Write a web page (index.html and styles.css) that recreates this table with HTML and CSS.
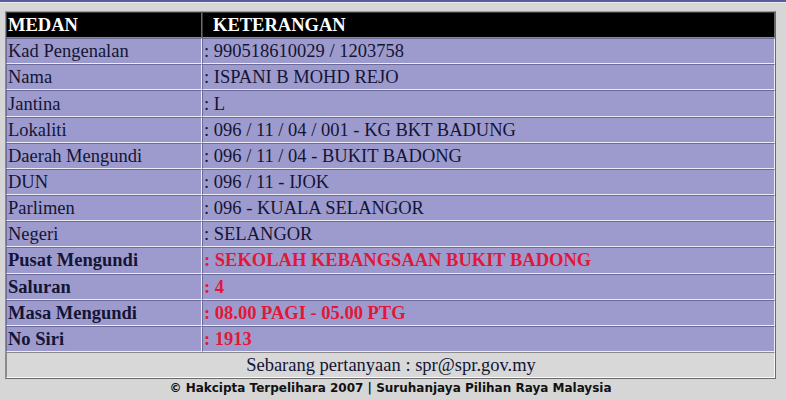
FILE: index.html
```html
<!DOCTYPE html>
<html>
<head>
<meta charset="utf-8">
<link rel="stylesheet" href="styles.css">
</head>
<body>
<div class="topbar"></div>
<div class="page">
<table class="info">
  <tr class="head"><th class="c1">MEDAN</th><th class="c2">KETERANGAN</th></tr>
  <tr><td class="c1">Kad Pengenalan</td><td class="c2">: 990518610029 / 1203758</td></tr>
  <tr><td class="c1">Nama</td><td class="c2">: ISPANI B MOHD REJO</td></tr>
  <tr><td class="c1">Jantina</td><td class="c2">: L</td></tr>
  <tr><td class="c1">Lokaliti</td><td class="c2">: 096 / 11 / 04 / 001 - KG BKT BADUNG</td></tr>
  <tr><td class="c1">Daerah Mengundi</td><td class="c2">: 096 / 11 / 04 - BUKIT BADONG</td></tr>
  <tr><td class="c1">DUN</td><td class="c2">: 096 / 11 - IJOK</td></tr>
  <tr><td class="c1">Parlimen</td><td class="c2">: 096 - KUALA SELANGOR</td></tr>
  <tr><td class="c1">Negeri</td><td class="c2">: SELANGOR</td></tr>
  <tr class="key"><td class="c1">Pusat Mengundi</td><td class="c2">: SEKOLAH KEBANGSAAN BUKIT BADONG</td></tr>
  <tr class="key"><td class="c1">Saluran</td><td class="c2">: 4</td></tr>
  <tr class="key"><td class="c1">Masa Mengundi</td><td class="c2">: 08.00 PAGI - 05.00 PTG</td></tr>
  <tr class="key"><td class="c1">No Siri</td><td class="c2">: 1913</td></tr>
  <tr class="foot"><td colspan="2">Sebarang pertanyaan : spr@spr.gov.my</td></tr>
</table>
<div class="copy">© Hakcipta Terpelihara 2007 | Suruhanjaya Pilihan Raya Malaysia</div>
</div>
</body>
</html>
```
FILE: styles.css
```css
html, body {
  margin: 0;
  padding: 0;
  background: #d6d6d6;
}
.topbar {
  height: 2px;
  background: #5a5a9c;
  border-bottom: 1px solid #ececf2;
}
.page {
  padding: 8px 0 0 5px;
}
.info {
  width: 771px;
  border-collapse: separate;
  border-spacing: 0;
  border-top: 1px solid #9a9a9a;
  border-left: 1px solid #8c8c8c;
  border-right: 1px solid #6a6a6a;
  border-bottom: 1px solid #6a6a6a;
  font-family: "Liberation Serif", "Times New Roman", serif;
  font-size: 18.5px;
  color: #141434;
}
.info td, .info th {
  height: 24.17px;
  line-height: 24px;
  padding: 0 0 0 1px;
  text-align: left;
  white-space: nowrap;
  background: #9d9bcd;
  border-top: 1px solid #6c6b98;
  border-left: 1px solid #6c6b98;
  border-bottom: 1px solid #ecebf6;
  border-right: 1px solid #ecebf6;
}
.info .c1 { width: 193px; }
.head th {
  background: #000;
  color: #fff;
  font-weight: bold;
  border-top-color: #3a3a3a;
  border-left-color: #3a3a3a;
  border-bottom-color: #8a8a9a;
  border-right-color: #6a6a6a;
}
.head .c2 { padding-left: 10px; }
.key td { font-weight: bold; }
.key .c2 { color: #e01838; }
.foot td {
  background: #d8d8d8;
  text-align: center;
  border-top-color: #8a8a8a;
  border-left-color: #8a8a8a;
  border-bottom-color: #fafafa;
  border-right-color: #fafafa;
}
.copy {
  width: 771px;
  text-align: center;
  font-family: "DejaVu Sans", Verdana, sans-serif;
  font-weight: bold;
  font-size: 12px;
  line-height: 14px;
  padding-top: 2px;
  color: #111;
}
```
